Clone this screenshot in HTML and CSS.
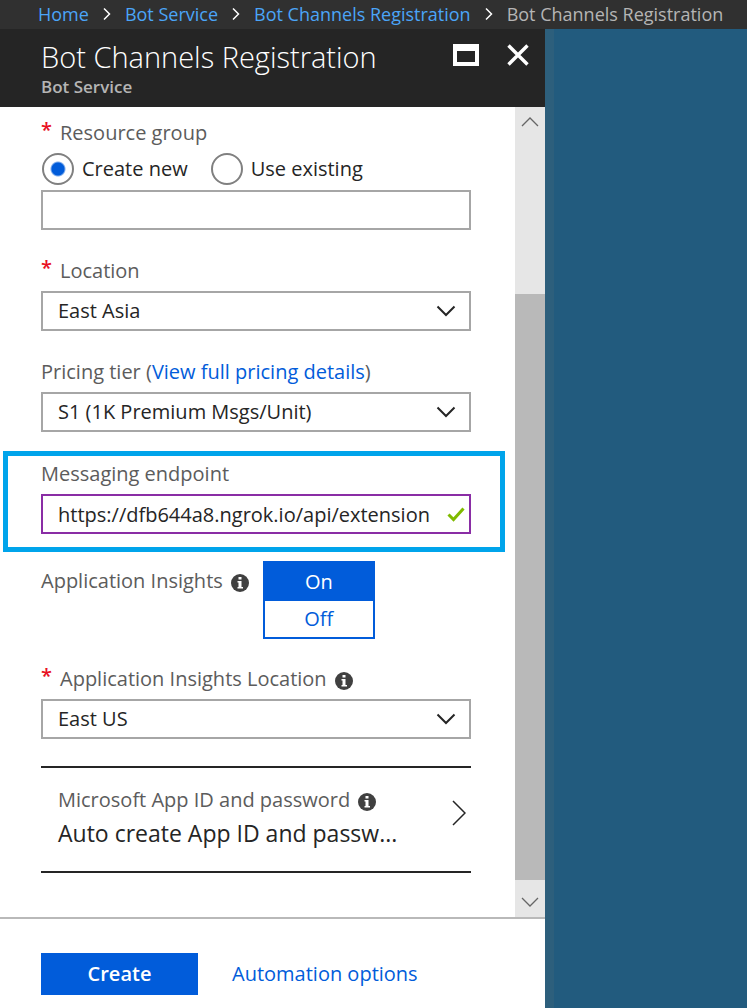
FILE: index.html
```html
<!DOCTYPE html>
<html lang="en">
<head>
<meta charset="utf-8">
<meta name="viewport" content="width=device-width, initial-scale=1">
<title>Bot Channels Registration</title>
<link rel="stylesheet" href="styles.css">
</head>
<body>
<nav class="breadcrumb" aria-label="Breadcrumb">
  <a href="#">Home</a>
  <svg class="crumb-arrow" viewBox="0 0 8 14" aria-hidden="true"><path d="M1 1.5 6.5 7 1 12.5"/></svg>
  <a href="#">Bot Service</a>
  <svg class="crumb-arrow" viewBox="0 0 8 14" aria-hidden="true"><path d="M1 1.5 6.5 7 1 12.5"/></svg>
  <a href="#">Bot Channels Registration</a>
  <svg class="crumb-arrow" viewBox="0 0 8 14" aria-hidden="true"><path d="M1 1.5 6.5 7 1 12.5"/></svg>
  <span>Bot Channels Registration</span>
</nav>
<div class="workspace">
  <section class="blade">
    <header class="blade-header">
      <div class="blade-titles">
        <h1>Bot Channels Registration</h1>
        <p>Bot Service</p>
      </div>
      <button class="window-button" type="button" aria-label="Maximize">
        <svg width="26" height="22" viewBox="0 0 26 22"><path fill="#fff" fill-rule="evenodd" d="M0 0h26v22H0zM4 7v11h18V7z"/></svg>
      </button>
      <button class="window-button" type="button" aria-label="Close">
        <svg width="22" height="22" viewBox="0 0 22 22"><path d="M1.5 1.5l19 19M20.5 1.5l-19 19" stroke="#fff" stroke-width="3.4"/></svg>
      </button>
    </header>
    <div class="blade-body">
      <form class="form">
        <div class="field">
          <label class="label" for="group"><span class="required">*</span>Resource group</label>
          <div class="radios">
            <label><input type="radio" name="mode" checked>Create new</label>
            <label><input type="radio" name="mode">Use existing</label>
          </div>
          <input class="control" id="group" type="text">
        </div>
        <div class="field">
          <label class="label" for="location"><span class="required">*</span>Location</label>
          <div class="select">
            <select class="control" id="location"><option>East Asia</option></select>
            <svg viewBox="0 0 20 12" aria-hidden="true"><path d="M1.5 1.5 10 10l8.500-8.500"/></svg>
          </div>
        </div>
        <div class="field">
          <div class="label"><label for="tier">Pricing tier</label>&nbsp;(<a href="#">View full pricing details</a>)</div>
          <div class="select">
            <select class="control" id="tier"><option>S1 (1K Premium Msgs/Unit)</option></select>
            <svg viewBox="0 0 20 12" aria-hidden="true"><path d="M1.5 1.5 10 10l8.500-8.500"/></svg>
          </div>
        </div>
        <div class="field highlight">
          <label class="label" for="endpoint">Messaging endpoint</label>
          <div class="endpoint">
            <input class="control" id="endpoint" type="text" value="https://dfb644a8.ngrok.io/api/extension">
            <svg viewBox="0 0 18 15" aria-hidden="true"><path d="M1.500 7.500 6.500 12.500 16.500 1.500"/></svg>
          </div>
        </div>
        <div class="insights">
          <div class="label">Application Insights
            <svg class="info" viewBox="0 0 18 18" aria-hidden="true"><circle cx="9" cy="9" r="9"/><path d="M7.500 3h3v2.500h-3zM6.500 7h4v6H12v1.500H6.500V13h1V8.500h-1z"/></svg>
          </div>
          <div class="toggle" role="group" aria-label="Application Insights">
            <button type="button" aria-pressed="true">On</button>
            <button type="button" aria-pressed="false">Off</button>
          </div>
        </div>
        <div class="field">
          <label class="label" for="insights-location"><span class="required">*</span>Application Insights Location
            <svg class="info" viewBox="0 0 18 18" aria-hidden="true"><circle cx="9" cy="9" r="9"/><path d="M7.500 3h3v2.500h-3zM6.500 7h4v6H12v1.500H6.500V13h1V8.500h-1z"/></svg>
          </label>
          <div class="select">
            <select class="control" id="insights-location"><option>East US</option></select>
            <svg viewBox="0 0 20 12" aria-hidden="true"><path d="M1.5 1.5 10 10l8.500-8.500"/></svg>
          </div>
        </div>
        <button class="picker" type="button">
          <span class="picker-text">
            <span class="label">Microsoft App ID and password
              <svg class="info" viewBox="0 0 18 18" aria-hidden="true"><circle cx="9" cy="9" r="9"/><path d="M7.500 3h3v2.500h-3zM6.500 7h4v6H12v1.500H6.500V13h1V8.500h-1z"/></svg>
            </span>
            <span class="picker-value">Auto create App ID and passw...</span>
          </span>
          <svg class="picker-arrow" viewBox="0 0 14 26" aria-hidden="true"><path d="M1 1l12 12L1 25"/></svg>
        </button>
      </form>
      <div class="scrollbar" aria-hidden="true">
        <svg viewBox="0 0 30 37"><path d="M7 19l8-8 8 8"/></svg>
        <div class="scroll-space"></div>
        <div class="scroll-thumb"></div>
        <svg viewBox="0 0 30 37"><path d="M7 18l8 8 8-8"/></svg>
      </div>
    </div>
    <footer class="blade-footer">
      <button class="create" type="button">Create</button>
      <a href="#">Automation options</a>
    </footer>
  </section>
</div>
</body>
</html>
```

FILE: styles.css
```css
* {
  box-sizing: border-box;
}

body {
  margin: 0;
  min-height: 100vh;
  display: flex;
  flex-direction: column;
  background: #225b7e;
  color: #252525;
  font: 20px/28px "Open Sans", "Noto Sans", sans-serif;
}

button,
input,
select {
  font: inherit;
  color: inherit;
}

svg {
  display: block;
  flex: none;
  fill: none;
}

a {
  color: #015cda;
  text-decoration: none;
}

.breadcrumb {
  display: flex;
  align-items: center;
  gap: 14px;
  height: 29px;
  padding: 0 0 2px 38px;
  background: #303030;
  color: #b5b5b5;
  font-size: 18px;
  white-space: nowrap;
}

.breadcrumb a {
  color: #4ba5f8;
}

.crumb-arrow {
  width: 8px;
  height: 14px;
  stroke: #fff;
  stroke-width: 1.5;
}

.workspace {
  flex: 1;
  display: flex;
}

.blade {
  flex: 0 1 545px;
  min-width: 0;
  display: flex;
  flex-direction: column;
  background: #fff;
  box-shadow: 9px 0 0 #2d5f7c;
}

.blade-header {
  display: flex;
  align-items: flex-start;
  gap: 28px;
  height: 78px;
  padding: 8px 16px 0 41px;
  background: #252525;
  color: #fff;
}

.blade-titles {
  flex: 1;
  white-space: nowrap;
}

.blade-titles h1 {
  margin: 0;
  font-size: 29px;
  line-height: 40px;
  font-weight: 300;
}

.blade-titles p {
  margin: 0;
  color: #b5b5b5;
  font-size: 17px;
  line-height: 20px;
  font-weight: 600;
}

.window-button {
  margin-top: 7px;
  padding: 0;
  border: 0;
  background: none;
}

.blade-body {
  flex: 1;
  display: flex;
}

.form {
  flex: 1;
  min-width: 0;
  padding: 12px 44px 44px 41px;
}

.field {
  margin-bottom: 27px;
}

.label {
  display: flex;
  align-items: center;
  margin-bottom: 6px;
  color: #5c5c5c;
  white-space: nowrap;
}

.required {
  width: 19px;
  padding-bottom: 6px;
  color: #e81123;
  line-height: 22px;
  font-weight: 600;
}

.info {
  width: 18px;
  height: 18px;
  margin: 4px 0 0 8px;
}

.info circle {
  fill: #404040;
}

.info path {
  fill: #fff;
}

.control {
  display: block;
  width: 100%;
  height: 40px;
  margin: 0;
  padding: 0 15px;
  border: 2px solid #a6a6a6;
  border-radius: 0;
  background: #fff;
  appearance: none;
}

.radios {
  display: flex;
  gap: 22px;
  margin-bottom: 5px;
}

.radios label {
  display: flex;
  align-items: center;
  gap: 8px;
}

.radios input {
  appearance: none;
  width: 32px;
  height: 32px;
  margin: 0 0 0 1px;
  border: 2px solid #808080;
  border-radius: 50%;
}

.radios input:checked {
  background: radial-gradient(circle, #015cda 0 6px, #fff 8px);
}

.select,
.endpoint {
  display: grid;
  align-items: center;
}

.select > *,
.endpoint > * {
  grid-area: 1 / 1;
}

.select svg {
  justify-self: end;
  width: 20px;
  height: 12px;
  margin-right: 15px;
  stroke: #252525;
  stroke-width: 2;
  pointer-events: none;
}

.highlight {
  margin: -8px -34px 9px -38px;
  padding: 4px 29px 13px 33px;
  border: 5px solid #00a4eb;
}

.endpoint .control {
  padding-right: 36px;
  border-color: #8a2da5;
}

.endpoint svg {
  justify-self: end;
  width: 18px;
  height: 15px;
  margin-right: 6px;
  stroke: #7fba00;
  stroke-width: 3;
}

.insights {
  display: flex;
  align-items: flex-start;
  gap: 14px;
  margin-bottom: 26px;
}

.insights .label {
  margin: 6px 0 0;
}

.toggle {
  display: grid;
  grid-template-rows: 38px 36px;
  width: 112px;
  border: 2px solid #015cda;
}

.toggle button {
  padding: 0;
  border: 0;
  background: #fff;
  color: #015cda;
}

.toggle button[aria-pressed="true"] {
  background: #015cda;
  color: #fff;
}

.picker {
  display: flex;
  align-items: flex-start;
  justify-content: space-between;
  width: 100%;
  padding: 18px 5px 22px 17px;
  border: solid #252525;
  border-width: 2px 0;
  background: none;
  text-align: left;
}

.picker .label {
  margin-bottom: 4px;
}

.picker-value {
  display: block;
  font-size: 23px;
  line-height: 31px;
  white-space: nowrap;
}

.picker-arrow {
  width: 14px;
  height: 26px;
  margin-top: 14px;
  stroke: #252525;
  stroke-width: 1.5;
}

.scrollbar {
  display: flex;
  flex-direction: column;
  width: 30px;
  background: #e6e6e6;
}

.scrollbar svg {
  width: 30px;
  height: 37px;
  stroke: #666;
  stroke-width: 1.3;
}

.scroll-space {
  flex: 150;
}

.scroll-thumb {
  flex: 586;
  background: #b9b9b9;
}

.blade-footer {
  display: flex;
  align-items: center;
  gap: 34px;
  padding: 34px 41px 13px;
  border-top: 2px solid #b9b9b9;
}

.create {
  width: 157px;
  height: 42px;
  padding: 0;
  border: 0;
  background: #015cda;
  color: #fff;
  font-weight: 600;
}
```
